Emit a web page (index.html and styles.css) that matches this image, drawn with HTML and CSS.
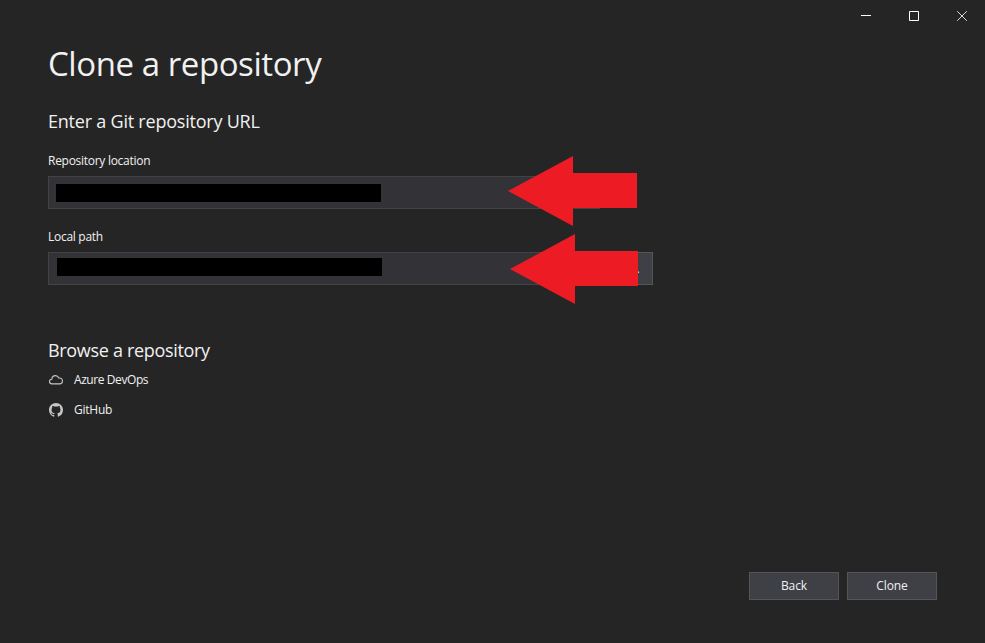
FILE: index.html
```html
<!DOCTYPE html>
<html lang="en">
<head>
<meta charset="utf-8">
<title>Clone a repository</title>
<link rel="stylesheet" href="styles.css">
</head>
<body>
<div class="window">
  <header class="titlebar">
    <svg class="caption" viewBox="0 0 48 32"><path d="M21 15.5h10"/></svg>
    <svg class="caption" viewBox="0 0 48 32"><path d="M21.5 11.5h9v9h-9z"/></svg>
    <svg class="caption close" viewBox="0 0 48 32"><path d="M21.2 11.2l9.6 9.6M30.8 11.2l-9.6 9.6"/></svg>
  </header>
  <main class="content">
    <h1>Clone a repository</h1>
    <h2 class="enter">Enter a Git repository URL</h2>
    <div class="label label-location">Repository location</div>
    <div class="field location">
      <div class="input"><div class="redacted"></div></div>
      <svg class="arrow" viewBox="0 0 129 70"><path d="M0 35L65 0V17H129V52H65V70Z"/></svg>
    </div>
    <div class="label label-path">Local path</div>
    <div class="field path">
      <div class="input"><div class="redacted"></div></div>
      <div class="browse">...</div>
      <svg class="arrow" viewBox="0 0 129 70"><path d="M0 35L65 0V17H128V52H65V70Z"/></svg>
    </div>
    <h2 class="browse-title">Browse a repository</h2>
    <div class="provider azure">
      <svg viewBox="0 0 16 16"><path class="cloud" d="M4 11.9C2.4 11.9 1.5 10.9 1.5 9.6C1.5 8.2 2.5 7.3 3.8 7.3C4 5 5.4 3.6 7.4 3.6C9 3.6 10.2 4.4 10.8 6C13 5.7 14.5 7.1 14.5 9C14.5 10.8 13.3 11.9 11.7 11.9Z"/></svg>
      <span>Azure DevOps</span>
    </div>
    <div class="provider github">
      <svg viewBox="0 0 16 16"><path class="octocat" transform="translate(1 1) scale(.875)" d="M8 0C3.58 0 0 3.58 0 8c0 3.54 2.29 6.53 5.47 7.59.4.07.55-.17.55-.38 0-.19-.01-.82-.01-1.49-2.01.37-2.53-.49-2.69-.94-.09-.23-.48-.94-.82-1.13-.28-.15-.68-.52-.01-.53.63-.01 1.08.58 1.23.82.72 1.21 1.87.87 2.33.66.07-.52.28-.87.51-1.07-1.78-.2-3.64-.89-3.64-3.95 0-.87.31-1.59.82-2.15-.08-.2-.36-1.02.08-2.12 0 0 .67-.21 2.2.82.64-.18 1.32-.27 2-.27s1.36.09 2 .27c1.53-1.04 2.2-.82 2.2-.82.44 1.1.16 1.92.08 2.12.51.56.82 1.27.82 2.15 0 3.07-1.87 3.75-3.65 3.95.29.25.54.73.54 1.48 0 1.07-.01 1.93-.01 2.2 0 .21.15.46.55.38A8.01 8.01 0 0 0 16 8c0-4.42-3.58-8-8-8z"/></svg>
      <span>GitHub</span>
    </div>
  </main>
  <footer class="actions">
    <button class="back">Back</button>
    <button class="clone">Clone</button>
  </footer>
</div>
</body>
</html>
```

FILE: styles.css
```css
* { box-sizing: border-box; }
body {
  margin: 0;
  background: #252526;
  color: #f1f1f1;
  font: 12px/16px "Open Sans", "Noto Sans", sans-serif;
}
.window { height: 643px; display: flex; flex-direction: column; overflow: hidden; }
.titlebar { height: 32px; flex: none; display: flex; justify-content: flex-end; padding-right: 1px; }
.caption { width: 48px; height: 32px; fill: none; stroke: #fff; stroke-width: 1; }
.close { stroke: #d8d8d8; }
.content { flex: 1; padding: 8px 48px 0; }
h1, h2 { margin: 0; font-weight: 400; white-space: nowrap; }
h1 { font-size: 33px; line-height: 48px; letter-spacing: -0.43px; }
h2 { font-size: 18px; line-height: 24px; }
.enter { margin-top: 21px; letter-spacing: -0.22px; }
.label { height: 16px; white-space: nowrap; letter-spacing: -0.28px; }
.label-location { margin-top: 20px; }
.label-path { margin-top: 20px; }
.field { position: relative; display: flex; height: 33px; width: 605px; }
.location { margin-top: 7px; }
.path { margin-top: 7px; }
.input { width: 552px; background: #333337; border: 1px solid #434346; padding: 7px 0 0 7px; }
.path .input { padding: 5px 0 0 8px; }
.redacted { width: 325px; height: 18px; background: #000; }
.browse { width: 45px; margin-left: 8px; padding-left: 8px; background: #3f3f46; border: 1px solid #555; text-align: center; line-height: 31px; letter-spacing: 1px; }
.arrow { position: absolute; left: 460px; top: -20px; width: 129px; height: 70px; fill: #ed1c24; }
.path .arrow { left: 462px; top: -18px; }
.browse-title { margin-top: 53px; letter-spacing: -0.32px; }
.provider { display: flex; gap: 10px; height: 16px; }
.provider svg { width: 16px; height: 16px; }
.azure { margin-top: 10px; letter-spacing: -0.42px; }
.github { margin-top: 14px; letter-spacing: -0.25px; }
.cloud { fill: none; stroke: #c5c5c5; stroke-width: 1.1; }
.octocat { fill: #c5c5c5; }
.actions { flex: none; display: flex; justify-content: flex-end; gap: 8px; padding: 0 48px 43px; }
.actions button { width: 90px; height: 28px; padding: 0; background: #3f3f46; border: 1px solid #555; color: #f1f1f1; font: inherit; letter-spacing: -0.1px; }
```
